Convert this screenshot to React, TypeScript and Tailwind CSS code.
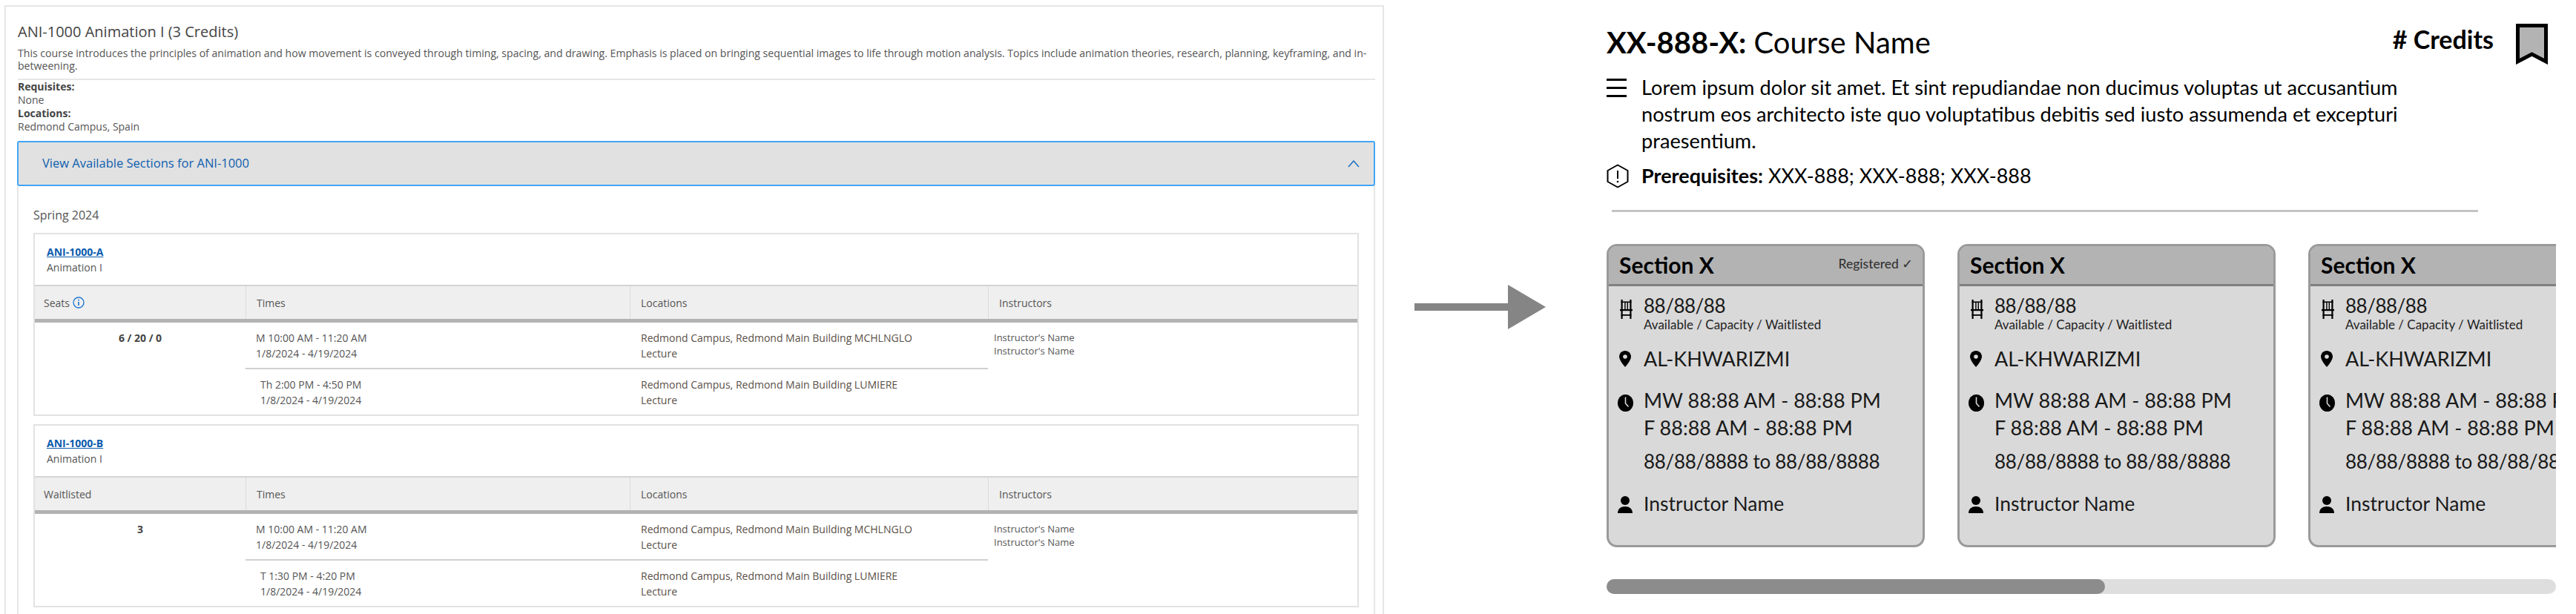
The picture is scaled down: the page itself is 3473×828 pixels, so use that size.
import React from "react";

const Lbl = ({ children }: { children: React.ReactNode }) => (
  <div className="h-[18px] text-[14px] leading-[18px] text-[#555]">{children}</div>
);

function InfoIcon() {
  return (
    <svg width="16" height="16" viewBox="0 0 16 16" className="ml-[4px]" fill="none">
      <circle cx="8" cy="8" r="7" stroke="#1976d2" strokeWidth="1.3" />
      <rect x="7.2" y="7" width="1.6" height="5" fill="#1976d2" />
      <rect x="7.2" y="3.8" width="1.6" height="1.7" fill="#1976d2" />
    </svg>
  );
}

function SectionRow({ time, date, loc, indent }: { time: string; date: string; loc: string; indent?: boolean }) {
  return (
    <div className="grid grid-cols-[518px_483px] h-[61px] text-[14px] text-[#555]">
      <div className={indent ? "pl-[20px] flex flex-col justify-center" : "pl-[14px] flex flex-col justify-center"}>
        <div className="h-[21px] leading-[21px]">{time}</div>
        <div className="h-[21px] leading-[21px]">{date}</div>
      </div>
      <div className="pl-[15px] flex flex-col justify-center text-[#5a5048]">
        <div className="h-[21px] leading-[21px]">{loc}</div>
        <div className="h-[21px] leading-[21px]">Lecture</div>
      </div>
    </div>
  );
}

function HeadCell({ children, first }: { children: React.ReactNode; first?: boolean }) {
  return (
    <div className={first ? "flex items-center pl-[12px] text-[14px] text-[#555]" : "flex items-center pl-[14px] border-l border-[#dcdcdc] text-[14px] text-[#555]"}>
      {children}
    </div>
  );
}

function Section({ code, seatHead, seat, secondTime, info }: { code: string; seatHead: string; seat: string; secondTime: string; info?: boolean }) {
  return (
    <div className="h-[247px] border-2 border-[#e2e2e2] flex flex-col shrink-0">
      <div className="h-[68px] shrink-0 pt-[13px] pl-[16px] text-[14px]">
        <div className="h-[21px] leading-[21px] font-bold underline text-[#0b5cad]">{code}</div>
        <div className="h-[21px] leading-[21px] text-[#555]">Animation I</div>
      </div>
      <div className="h-[51px] shrink-0 border-t-2 border-t-[#d4d4d4] border-b-[5px] border-b-[#b2b2b2] bg-[#efefef] grid grid-cols-[284px_518px_483px_1fr]">
        <HeadCell first>{seatHead}{info && <InfoIcon />}</HeadCell>
        <HeadCell>Times</HeadCell>
        <HeadCell>Locations</HeadCell>
        <HeadCell>Instructors</HeadCell>
      </div>
      <div className="flex">
        <div className="w-[284px] pt-[10px] text-center text-[14px] leading-[21px] font-bold text-[#444]">{seat}</div>
        <div className="w-[1001px] flex flex-col">
          <div className="border-b-2 border-[#d0d0d0]">
            <SectionRow time="M 10:00 AM - 11:20 AM" date="1/8/2024 - 4/19/2024" loc="Redmond Campus, Redmond Main Building MCHLNGLO" />
          </div>
          <SectionRow indent time={secondTime} date="1/8/2024 - 4/19/2024" loc="Redmond Campus, Redmond Main Building LUMIERE" />
        </div>
        <div className="pl-[8px] pt-[11px] text-[13px] leading-[18px] text-[#555]">
          <div>Instructor's Name</div>
          <div>Instructor's Name</div>
        </div>
      </div>
    </div>
  );
}

function Chair() {
  return (
    <svg width="17" height="26" viewBox="0 0 17 26" fill="#000" className="ml-[15px] mt-[8px]">
      <rect x="1.5" y="0" width="2.2" height="26" />
      <rect x="13.3" y="0" width="2.2" height="26" />
      <rect x="1.5" y="2.5" width="14" height="1.6" />
      <rect x="6.2" y="4" width="1.4" height="9" />
      <rect x="9.6" y="4" width="1.4" height="9" />
      <rect x="0" y="13" width="17" height="2.2" />
      <rect x="1.5" y="20" width="14" height="1.8" />
    </svg>
  );
}

function Pin() {
  return (
    <svg width="16" height="22" viewBox="0 0 16 22" className="ml-[14px] mt-[7px]">
      <path d="M8 0C3.6 0 0 3.6 0 8c0 5 8 14 8 14s8-9 8-14c0-4.4-3.6-8-8-8z" fill="#000" />
      <circle cx="8" cy="8" r="2.8" fill="#d9d9d9" />
    </svg>
  );
}

function Clock() {
  return (
    <svg width="21" height="23" viewBox="0 0 21 23" className="ml-[12px] mt-[11px]">
      <ellipse cx="10.5" cy="11.5" rx="10.5" ry="11.5" fill="#000" />
      <path d="M10.5 3.5V12l4 4.5" fill="none" stroke="#d9d9d9" strokeWidth="1.6" />
    </svg>
  );
}

function Person() {
  return (
    <svg width="20" height="23" viewBox="0 0 20 23" className="ml-[12px] mt-[8px]">
      <circle cx="10" cy="6" r="6" fill="#000" />
      <path d="M0 23c0-6 4.5-9 10-9s10 3 10 9z" fill="#000" />
    </svg>
  );
}

function Card({ registered }: { registered?: boolean }) {
  return (
    <div className="w-[429px] h-[409px] shrink-0 border-[3px] border-[#9a9a9a] rounded-[14px] overflow-hidden bg-[#d9d9d9] text-[#1a1a1a]">
      <div className="h-[54px] bg-[#b3b3b3] border-b-[3px] border-[#808080] flex items-center justify-between pl-[14px] pr-[13px]">
        <span className="text-[30px] font-bold text-black">Section X</span>
        {registered && (
          <span className="text-[17.5px] font-medium text-[#333] -mt-[3px]">
            Registered <span className="font-['DejaVu_Sans',sans-serif] font-normal">✓</span>
          </span>
        )}
      </div>
      <div className="flex pt-[10px]">
        <div className="w-[47px] shrink-0"><Chair /></div>
        <div>
          <div className="text-[26px] tracking-[-0.5px] leading-[32px]">88/88/88</div>
          <div className="text-[17px] leading-[20px] text-[#222]">Available / Capacity / Waitlisted</div>
        </div>
      </div>
      <div className="flex mt-[18px]">
        <div className="w-[47px] shrink-0"><Pin /></div>
        <div className="text-[27px] leading-[36px]">AL-KHWARIZMI</div>
      </div>
      <div className="flex mt-[19px]">
        <div className="w-[47px] shrink-0"><Clock /></div>
        <div className="text-[27px] leading-[37px]">
          <div>MW 88:88 AM - 88:88 PM</div>
          <div>F 88:88 AM - 88:88 PM</div>
          <div className="mt-[9px] whitespace-nowrap text-[26px] tracking-[-0.3px]">88/88/8888 to 88/88/8888</div>
        </div>
      </div>
      <div className="flex mt-[20px]">
        <div className="w-[47px] shrink-0"><Person /></div>
        <div className="text-[26.5px] leading-[36px]">Instructor Name</div>
      </div>
    </div>
  );
}

export default function App() {
  return (
    <div className="w-[3473px] h-[828px] overflow-hidden flex bg-white">
      <div className="ml-[6px] mt-[7px] w-[1860px] h-[821px] shrink-0 border-2 border-b-0 border-[#e6e6e6] pl-[16px] pr-[10px] font-['Open_Sans',sans-serif]">
        <div className="mt-[21px] h-[26px] text-[20px] leading-[26px] text-[#444]">ANI-1000 Animation I (3 Credits)</div>
        <div className="mt-[7px] h-[43px] text-[14.1px] leading-[17px] text-[#555] whitespace-nowrap">
          This course introduces the principles of animation and how movement is conveyed through timing, spacing, and drawing. Emphasis is placed on bringing sequential images to life through motion analysis. Topics include animation theories, research, planning, keyframing, and in-
          <br />
          betweening.
        </div>
        <div className="h-[2px] bg-[#e6e6e6]" />
        <Lbl><b className="text-[#444]">Requisites:</b></Lbl>
        <Lbl>None</Lbl>
        <Lbl><b className="text-[#444]">Locations:</b></Lbl>
        <Lbl>Redmond Campus, Spain</Lbl>
        <div className="mt-[10px] h-[61px] -ml-[1px] border-2 border-[#42a5f5] rounded-[3px] bg-[#e1e1e1] flex items-center justify-between pl-[32px] pr-[19px] text-[16.5px] text-[#0e5fae]">
          <span>View Available Sections for ANI-1000</span>
          <svg width="16" height="10" viewBox="0 0 16 10" fill="none">
            <path d="M1 9l7-8 7 8" stroke="#1a6fc0" strokeWidth="1.5" />
          </svg>
        </div>
        <div className="-ml-[1px] h-[577px] border-x-2 border-[#e6e6e6] pt-[29px] pl-[20px] pr-[20px]">
          <div className="h-[20px] leading-[20px] text-[16px] text-[#555] mb-[14px]">Spring 2024</div>
          <div className="flex flex-col gap-[11px]">
            <Section code="ANI-1000-A" seatHead="Seats" seat="6 / 20 / 0" secondTime="Th 2:00 PM - 4:50 PM" info />
            <Section code="ANI-1000-B" seatHead="Waitlisted" seat="3" secondTime="T 1:30 PM - 4:20 PM" />
          </div>
        </div>
      </div>

      <svg width="177" height="60" viewBox="0 0 177 60" className="ml-[41px] shrink-0 self-center">
        <rect x="0" y="25" width="127" height="10" fill="#858585" />
        <polygon points="126,0 177,30 126,60" fill="#858585" />
      </svg>

      <div className="ml-[82px] w-[1280px] shrink-0 overflow-hidden font-['Lato',sans-serif] text-black">
        <div className="mt-[32px] h-[55px] flex items-start pr-[11px]">
          <div className="mt-[2px] h-[46px] leading-[46px] text-[40px]">
            <b>XX-888-X:</b> Course Name
          </div>
          <div className="ml-auto h-[42px] leading-[42px] text-[34px] font-bold"># Credits</div>
          <svg width="43" height="55" viewBox="0 0 43 55" className="ml-[30px]">
            <path d="M2.5 2.5H40.5V51L21.5 41L2.5 51Z" fill="#b3b3b3" stroke="#000" strokeWidth="5" />
          </svg>
        </div>
        <div className="mt-[13px] flex">
          <svg width="47" height="36" viewBox="0 0 47 36" className="shrink-0">
            <rect x="0" y="6" width="27" height="3" fill="#000" />
            <rect x="0" y="17" width="27" height="3" fill="#000" />
            <rect x="0" y="28" width="27" height="3" fill="#000" />
          </svg>
          <div className="text-[27.2px] leading-[36px]">
            Lorem ipsum dolor sit amet. Et sint repudiandae non ducimus voluptas ut accusantium<br />
            nostrum eos architecto iste quo voluptatibus debitis sed iusto assumenda et excepturi<br />
            praesentium.
          </div>
        </div>
        <div className="mt-[11px] flex items-center h-[36px]">
          <svg width="47" height="33" viewBox="0 0 47 33" fill="none" className="shrink-0">
            <path d="M15 1.5L28.5 9V24L15 31.5L1.5 24V9Z" stroke="#000" strokeWidth="2" strokeLinejoin="round" />
            <path d="M15 9V20" stroke="#000" strokeWidth="2" />
            <circle cx="15" cy="24" r="1.3" fill="#000" />
          </svg>
          <div className="text-[27px] leading-[36px]"><b>Prerequisites:</b> XXX-888; XXX-888; XXX-888</div>
        </div>
        <div className="mt-[28px] ml-[7px] w-[1168px] h-[3px] bg-[#c4c4c4]" />
        <div className="mt-[43px] flex gap-[44px]">
          <Card registered />
          <Card />
          <Card />
        </div>
        <div className="mt-[43px] h-[20px] rounded-full bg-[#dedede]">
          <div className="w-[672px] h-[20px] rounded-full bg-[#8c8c8c]" />
        </div>
      </div>
    </div>
  );
}
